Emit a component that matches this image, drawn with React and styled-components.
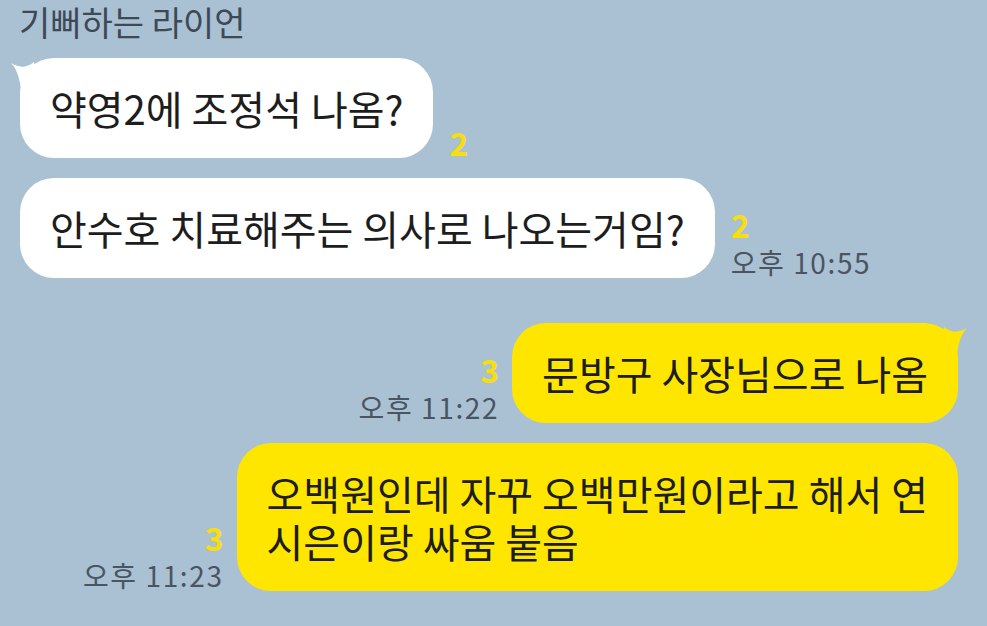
import React from 'react';
import styled, { createGlobalStyle } from 'styled-components';

const GlobalStyle = createGlobalStyle`
  html, body {
    margin: 0;
    padding: 0;
    background-color: #aac0d3;
  }
  body {
    font-family: "Noto Sans CJK KR", "Noto Sans", sans-serif;
  }
`;

const ChatRoom = styled.div`
  width: 987px;
  height: 626px;
  overflow: hidden;
  display: flex;
  flex-direction: column;
  box-sizing: border-box;
  padding-top: 2px;
`;

const SenderName = styled.div`
  font-size: 34px;
  line-height: 40px;
  color: #3d4955;
  padding-left: 19px;
  margin-bottom: 16px;
`;

const Row = styled.div`
  display: flex;
  align-items: flex-end;
  gap: ${props => (props.mine ? '13px' : '16px')};
  flex-direction: ${props => (props.mine ? 'row-reverse' : 'row')};
  padding: ${props => (props.mine ? '0 29px 0 0' : '0 0 0 20px')};
  margin-top: ${props => props.space || 0}px;
`;

const Bubble = styled.div`
  position: relative;
  background-color: ${props => (props.mine ? '#ffe600' : '#ffffff')};
  color: #1d1d1d;
  font-size: 40px;
  line-height: 48px;
  padding: 26px 30px;
  border-radius: 34px;
  white-space: nowrap;
`;

const TailSvg = styled.svg`
  position: absolute;
  top: 0;
  width: 40px;
  height: 40px;
  ${props => (props.mine ? 'right: -12px; transform: scaleX(-1);' : 'left: -12px;')}
`;

const Meta = styled.div`
  display: flex;
  flex-direction: column;
  align-items: ${props => (props.mine ? 'flex-end' : 'flex-start')};
  gap: 8px;
`;

const Unread = styled.span`
  font-size: 32px;
  line-height: 32px;
  font-weight: 600;
  color: #f7de10;
`;

const Time = styled.span`
  font-size: 28px;
  line-height: 28px;
  letter-spacing: 1.6px;
  color: #495562;
  margin-bottom: 2px;
  white-space: nowrap;
`;

function Tail({ mine }) {
  return (
    <TailSvg mine={mine} viewBox="0 0 40 40">
      <path
        d="M3 5 C 10 9, 17 11, 26 4 L 32 32 L 12.5 28 C 11 18, 8 10, 3 5 Z"
        fill={mine ? '#ffe600' : '#ffffff'}
      />
    </TailSvg>
  );
}

function Message({ mine, first, unread, time, space, children }) {
  return (
    <Row mine={mine} space={space}>
      <Bubble mine={mine}>
        {first && <Tail mine={mine} />}
        {children}
      </Bubble>
      <Meta mine={mine}>
        {unread && <Unread>{unread}</Unread>}
        {time && <Time>{time}</Time>}
      </Meta>
    </Row>
  );
}

export default function App() {
  return (
    <ChatRoom>
      <GlobalStyle />
      <SenderName>기뻐하는 라이언</SenderName>
      <Message first unread="2">약영2에 조정석 나옴?</Message>
      <Message unread="2" time="오후 10:55" space={20}>
        안수호 치료해주는 의사로 나오는거임?
      </Message>
      <Message mine first unread="3" time="오후 11:22" space={45}>
        문방구 사장님으로 나옴
      </Message>
      <Message mine unread="3" time="오후 11:23" space={20}>
        오백원인데 자꾸 오백만원이라고 해서 연<br />시은이랑 싸움 붙음
      </Message>
    </ChatRoom>
  );
}
